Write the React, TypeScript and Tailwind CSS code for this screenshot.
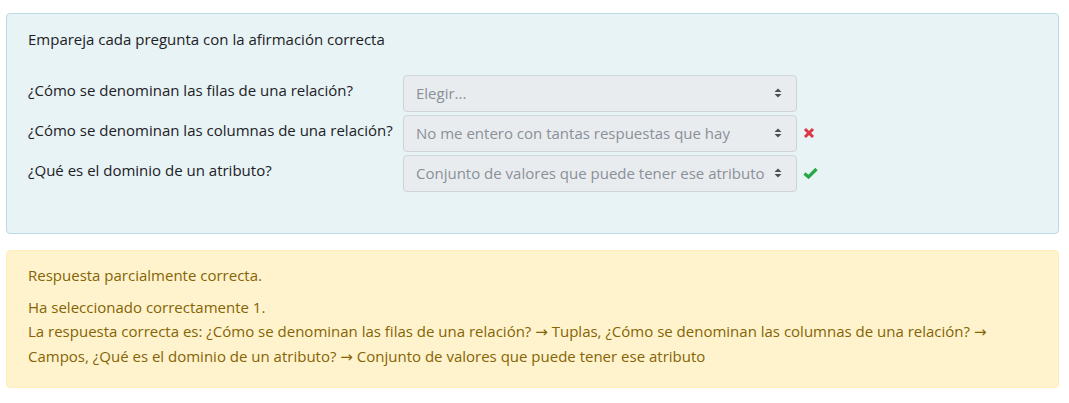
import React from "react";

const Chevrons = () => (
  <svg width="8" height="12" viewBox="0 0 8 12" className="shrink-0">
    <path d="M0.5 5 L4 1.5 L7.5 5 Z" fill="#495057" />
    <path d="M0.5 7 L4 10.5 L7.5 7 Z" fill="#495057" />
  </svg>
);

const Cross = () => (
  <svg width="12" height="12" viewBox="0 0 12 12">
    <path d="M2 2 L10 10 M10 2 L2 10" stroke="#dc3545" strokeWidth="3" strokeLinecap="butt" />
  </svg>
);

const Check = () => (
  <svg width="15" height="12" viewBox="0 0 15 12">
    <path d="M1.5 6.5 L5.5 10 L13.5 2" stroke="#28a745" strokeWidth="3.2" fill="none" />
  </svg>
);

const Select = ({ value }: { value: string }) => (
  <div className="flex h-[37px] w-[394px] items-center justify-between rounded-[4px] border border-[#ced4da] bg-[#e9ecef] pl-[12px] pr-[14px] text-[#8a9098]">
    <span className="truncate">{value}</span>
    <Chevrons />
  </div>
);

const Arrow = () => <span style={{ fontFamily: '"DejaVu Sans", sans-serif' }}>→</span>;

const rows: { q: string; a: string; mark?: "x" | "ok" }[] = [
  { q: "¿Cómo se denominan las filas de una relación?", a: "Elegir..." },
  { q: "¿Cómo se denominan las columnas de una relación?", a: "No me entero con tantas respuestas que hay", mark: "x" },
  { q: "¿Qué es el dominio de un atributo?", a: "Conjunto de valores que puede tener ese atributo", mark: "ok" },
];

export default function App() {
  return (
    <div
      className="min-h-[403px] bg-white pl-[6px] pr-[10px] pt-[13px] text-[15px] leading-[22.5px]"
      style={{ fontFamily: '"Segoe UI", "Open Sans", "Noto Sans", sans-serif' }}
    >
      <div className="rounded-[4px] border border-[#b8dce2] bg-[#e7f3f5] pb-[41px] pl-[21px] pr-[20px] pt-[14px] text-[#1d2125]">
        <p>Empareja cada pregunta con la afirmación correcta</p>
        <div className="mt-[24px] flex flex-col gap-[3px]">
          {rows.map((r) => (
            <div key={r.q} className="flex items-start">
              <div className="w-[375px] pt-[4px]">{r.q}</div>
              <Select value={r.a} />
              <div className="flex h-[37px] items-center pl-[6px]">
                {r.mark === "x" && <Cross />}
                {r.mark === "ok" && <Check />}
              </div>
            </div>
          ))}
        </div>
      </div>
      <div className="mt-[16px] rounded-[4px] border border-[#ffeeba] bg-[#fff3cd] pb-[18px] pl-[21px] pr-[20px] pt-[12px] leading-[24px] text-[#856404]">
        <p>Respuesta parcialmente correcta.</p>
        <p className="mt-[8px]">Ha seleccionado correctamente 1.</p>
        <p>
          La respuesta correcta es: ¿Cómo se denominan las filas de una relación? <Arrow /> Tuplas, ¿Cómo se denominan
          las columnas de una relación? <Arrow /> Campos, ¿Qué es el dominio de un atributo? <Arrow /> Conjunto de
          valores que puede tener ese atributo
        </p>
      </div>
    </div>
  );
}
